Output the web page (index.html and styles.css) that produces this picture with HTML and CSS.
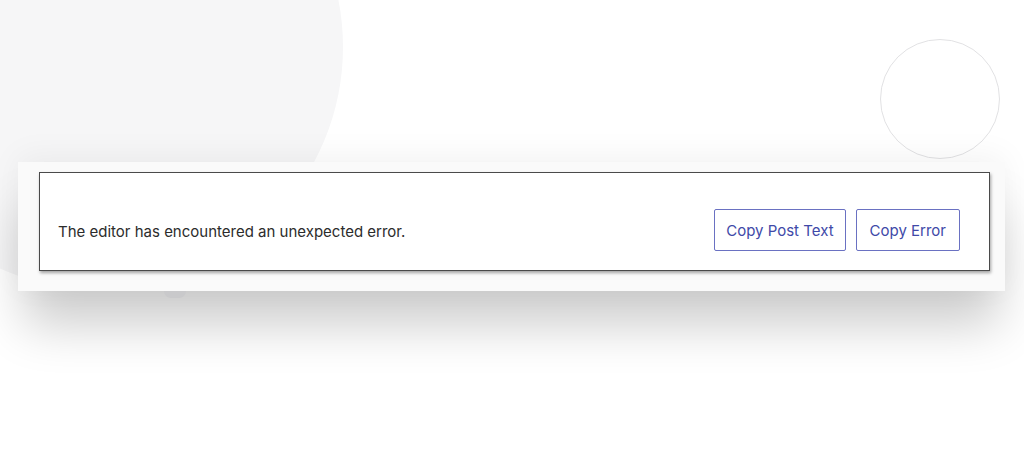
FILE: index.html
```html
<!DOCTYPE html>
<html lang="en">
<head>
	<meta charset="UTF-8">
	<title>Editor error</title>
	<link rel="stylesheet" href="styles.css">
</head>
<body>
	<div class="stage">
		<div class="blob"></div>
		<div class="ring"></div>
		<div class="band">
			<div class="dot"></div>
			<div class="notice">
				<p class="message">The editor has encountered an unexpected error.</p>
				<div class="actions">
					<button type="button" class="btn">Copy Post Text</button>
					<button type="button" class="btn">Copy Error</button>
				</div>
			</div>
		</div>
	</div>
</body>
</html>
```

FILE: styles.css
```css
html, body {
	margin: 0;
	background: #fff;
	font-family: Inter, "Noto Sans", "Liberation Sans", sans-serif;
}
.stage {/*整个画面*/
	position: relative;
	width: 1024px;
	height: 468px;
	overflow: hidden;
	padding-top: 162px;
	padding-left: 18px;
	box-sizing: border-box;
}
.blob {/*左上角的大圆*/
	position: absolute;
	left: -143px;
	top: -196px;
	width: 486px;
	height: 486px;
	border-radius: 50%;
	background: #f6f6f7;
}
.ring {/*右上角的圆圈*/
	position: absolute;
	left: 880px;
	top: 39px;
	width: 120px;
	height: 120px;
	border-radius: 50%;
	border: 1px solid #e2e2e4;
	box-sizing: border-box;
}
.band {/*浅灰色的条*/
	position: relative;
	width: 987px;
	height: 129px;
	box-sizing: border-box;
	padding: 10px 15px 0 21px;
	background: #fafafa;
	box-shadow: 0 40px 50px -6px rgba(0, 0, 0, 0.2), 0 -6px 30px rgba(0, 0, 0, 0.05);
}
.dot {/*条下面露出的半个小圆*/
	position: absolute;
	left: 146px;
	top: 129px;
	width: 22px;
	height: 7px;
	border-radius: 0 0 11px 11px;
	background: #c9c9cb;
}
.notice {/*错误提示框*/
	display: flex;
	align-items: center;
	justify-content: space-between;
	height: 99px;
	box-sizing: border-box;
	padding: 36px 29px 19px 18px;
	background: #fff;
	border: 1px solid #4a4a4a;
	box-shadow: 1px 2px 3px rgba(0, 0, 0, 0.35);
}
.message {
	margin: 3px 0 0;
	font-size: 15px;
	color: #2c2c2c;
}
.actions {
	display: flex;
	gap: 10px;
}
.btn {/*两个按钮*/
	height: 42px;
	padding: 0 13px;
	font-family: inherit;
	font-size: 15px;
	color: #4049a8;
	background: #fff;
	border: 1px solid #6a71c2;
	border-radius: 2px;
}
.btn:first-child {
	padding: 0 11px;
}
```
